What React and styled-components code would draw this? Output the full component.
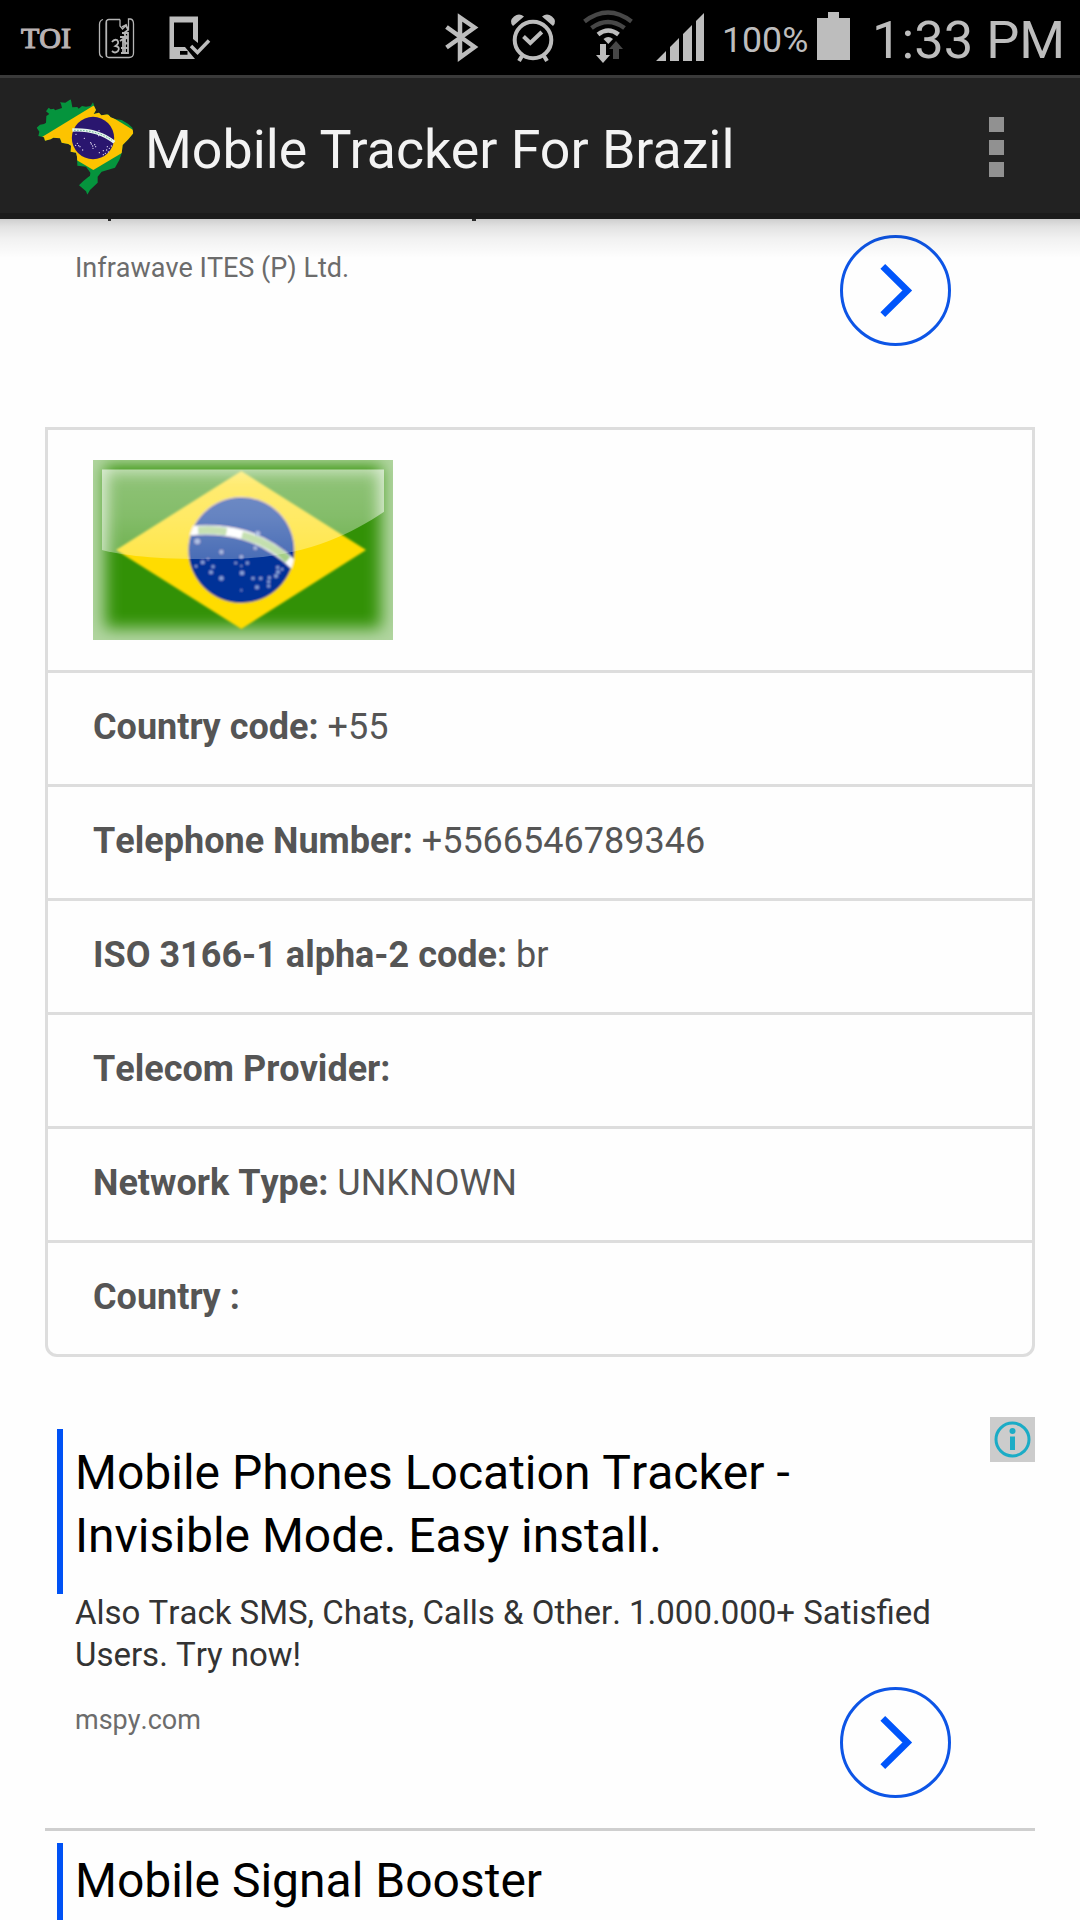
import React from 'react'
import styled, { createGlobalStyle } from 'styled-components'

const GlobalStyle = createGlobalStyle`
    * {
        box-sizing: border-box;
    }
    body {
        margin: 0;
        background-color: #fefefe;
        font-family: Roboto, "Liberation Sans", sans-serif;
        font-kerning: none;
    }
`
const Screen = styled.div`
    width: 1080px;
    height: 1920px;
    overflow: hidden;
    background-color: #fefefe;
`
const StatusBar = styled.div`
    height: 78px;
    display: flex;
    justify-content: space-between;
    background-color: black;
    border-bottom: 3px solid #3a3a3a;
    color: #bdbdbd;
`
const StatusGroup = styled.div`
    display: flex;
    align-items: center;
    height: 75px;
    white-space: nowrap;
`
const StatusIcon = styled.svg`
    display: block;
    flex: none;
    width: ${props => props.$w}px;
    height: 75px;
`
const NewsTag = styled.span`
    width: 49px;
    margin: 0 25px 0 21px;
    font-family: "Liberation Serif", serif;
    font-size: 30px;
    line-height: 75px;
    color: #b9b2b3;
    -webkit-text-stroke: 1.2px #b9b2b3;
`
const BatteryLevel = styled.span`
    width: 91px;
    margin-left: 16px;
    padding-top: 6px;
    font-size: 35.7px;
    line-height: 79px;
`
const Clock = styled.span`
    width: 213px;
    padding: 6px 0 0 5px;
    font-size: 52.5px;
    line-height: 81px;
`
const AppBar = styled.div`
    position: relative;
    z-index: 1;
    height: 141px;
    display: flex;
    align-items: center;
    background-color: #222222;
    border-bottom: 6px solid #1b1b1b;

    &::after {
        content: "";
        position: absolute;
        left: 0;
        right: 0;
        top: 141px;
        height: 39px;
        background: linear-gradient(rgba(0, 0, 0, 0.19), rgba(0, 0, 0, 0.11) 20%, rgba(0, 0, 0, 0.05) 50%, rgba(0, 0, 0, 0));
    }
`
const AppLogo = styled.svg`
    width: 110px;
    height: 110px;
    margin: 3px 0 0 33px;
`
const AppTitle = styled.h1`
    flex: 1;
    margin: 0;
    padding: 8px 0 0 2px;
    font-size: 53.7px;
    font-weight: 400;
    font-kerning: normal;
    line-height: 64px;
    color: #f3f3f3;
`
const MenuButton = styled.div`
    display: flex;
    flex-direction: column;
    gap: 7.5px;
    margin: 3px 76px 0 0;
`
const MenuDot = styled.span`
    width: 15px;
    height: 15px;
    background-color: #919191;
`
const Page = styled.div`
    margin: 0 45px;
`
const Ad = styled.div`
    position: relative;
    padding-left: 12px;
    border-bottom: ${props => props.$divider ? "3px solid #cfcfcf" : "none"};
    padding-bottom: ${props => props.$divider ? "30px" : "0"};
    margin-bottom: ${props => props.$divider ? "12px" : "0"};
`
const TopAd = styled(Ad)`
    height: 208px;
`
const Headline = styled.h2`
    margin: 0;
    height: 165px;
    padding: ${props => props.$short ? "6px" : "12px"} 0 0 12px;
    border-left: 6px solid #0052f5;
    font-size: 48px;
    font-weight: 400;
    line-height: 63px;
    color: black;
    white-space: pre-line;
`
const Description = styled.p`
    margin: -2px 0 0;
    padding-left: 18px;
    font-size: 33px;
    line-height: 42px;
    color: #333333;
    white-space: pre-line;
`
const Descenders = styled.div`
    display: flex;
    gap: 361px;
    height: 5px;
    padding-left: 51px;
`
const Descender = styled.span`
    width: ${props => props.$w}px;
    height: 2px;
    background-color: #333333;
`
const AdFooter = styled.div`
    display: flex;
    justify-content: space-between;
    margin-top: 11px;
    padding: 0 84px 0 18px;
`
const Domain = styled.span`
    padding-top: 12px;
    font-size: 27px;
    line-height: 42px;
    color: #6c6c6c;
`
const RoundButton = styled.div`
    width: 111px;
    height: 111px;
    border: 3px solid #0d55e6;
    border-radius: 50%;
`
const InfoBadge = styled.div`
    position: absolute;
    top: -12px;
    right: 0;
    width: 45px;
    height: 45px;
    background-color: #cccccc;
`
const Details = styled.div`
    margin-bottom: 72px;
    border: 3px solid #dddddd;
    border-radius: 0 0 12px 12px;
`
const Row = styled.div`
    height: ${props => props.$tall ? "243px" : "114px"};
    padding: ${props => props.$tall ? "30px 45px" : "32px 45px"};
    border-bottom: 3px solid #dddddd;
    font-size: 36px;
    line-height: 45px;
    color: #555555;

    &:last-child {
        height: 111px;
        border-bottom: none;
    }
`
const FlagImage = styled.svg`
    display: block;
    width: 300px;
    height: 180px;
`

const rows = [
    { label: "Country code:", value: "+55" },
    { label: "Telephone Number:", value: "+5566546789346" },
    { label: "ISO 3166-1 alpha-2 code:", value: "br" },
    { label: "Telecom Provider:", value: "" },
    { label: "Network Type:", value: "UNKNOWN" },
    { label: "Country :", value: "" },
]

const logoStars = [
    [228, 403], [253, 415], [232, 430], [227, 436], [240, 440], [248, 450], [236, 437], [274, 432],
    [278, 438], [284, 434], [272, 428], [287, 440], [279, 445], [298, 458], [310, 452], [316, 460],
    [310, 464], [322, 440], [328, 445], [320, 450], [297, 392], [296, 407], [325, 456], [334, 438],
]
const flagStars = [
    [502, 394, 8], [574, 426, 6], [518, 457, 6], [498, 469, 4], [534, 448, 3], [549, 470, 5], [543, 487, 6],
    [574, 505, 7], [634, 441, 5], [617, 459, 4], [652, 459, 5], [634, 468, 3], [636, 489, 7], [669, 505, 5],
    [692, 505, 5], [681, 532, 6], [716, 515, 5], [716, 528, 5], [718, 503, 5], [738, 498, 6], [744, 486, 6],
    [743, 472, 5], [756, 478, 4], [634, 541, 3], [683, 371, 7], [676, 414, 5],
]

const Logo = () => (
    <AppLogo viewBox="99 276 330 330">
        <clipPath id="land">
            <path d="M110 383l10-9 12-2 6-4 1-20 9-6-10-8 8-11 6 5 10-2 3 5 21-7-3-12-3-5 16 1 16-10 2 7 3 17 15-1 4 5 10-8 12 2 14-2 7-11 3 9 3 8 3 6-7 12 16-4 7 8 21-3 7 9 16 6 17 2 20 12 12 11 3 17-15 18-17 17-3 25-7 20-13 23-15 5-25 7-12 15v18l-23 22-8 14-4-10-21-18 13-13 12-10 8-6 1-9-13-18-18-2-8-1-1-27-3-12-16-3 1-18-8-5-20-4-5-13-20-2-8 5-17 4-3-10-17-4 3-13z" />
        </clipPath>
        <g clipPath="url(#land)">
            <path d="M100 280h310v310h-310z" fill="#05943d" />
            <path d="M120 415l160-98 160 98-160 95z" fill="#fdc300" />
        </g>
        <circle cx="279" cy="414" r="63.5" fill="#2a166f" />
        <path d="M217 390c46-2 88 6 126 37" fill="none" stroke="#e8f5ee" strokeWidth="10" />
        <path d="M222 391c42-1 80 6 114 30" fill="none" stroke="#6fb59a" strokeWidth="3" strokeDasharray="5 4" />
        {logoStars.map(([x, y]) => <circle key={x + "-" + y} cx={x} cy={y} r="1.9" fill="#e6e2f5" />)}
    </AppLogo>
)

const Flag = () => (
    <FlagImage viewBox="189 150 900 540">
        <defs>
            <linearGradient id="gloss" x1="0" y1="0" x2="0" y2="1">
                <stop offset="0" stopColor="#fff" stopOpacity="0.46" />
                <stop offset="0.5" stopColor="#fff" stopOpacity="0.4" />
                <stop offset="1" stopColor="#fff" stopOpacity="0.28" />
            </linearGradient>
            <clipPath id="glossArea">
                <path d="M216 178h846v127c-110 76-260 141-480 143-180 0-290-8-366-28z" />
            </clipPath>
            <clipPath id="globe">
                <circle cx="634" cy="420" r="160" />
            </clipPath>
            <filter id="soft" x="-20%" y="-20%" width="140%" height="140%"><feGaussianBlur stdDeviation="24" /></filter>
            <filter id="slight"><feGaussianBlur stdDeviation="2.4" /></filter>
        </defs>
        <path d="M189 150h900v540h-900z" fill="#329106" />
        <rect x="180" y="122" width="918" height="578" fill="none" stroke="#fff" strokeOpacity="0.62" strokeWidth="90" filter="url(#soft)" />
        <g filter="url(#slight)">
            <path d="M258 420l376-237 374 237-374 237z" fill="#ffdc00" />
            <circle cx="634" cy="420" r="159" fill="#003198" />
            <g clipPath="url(#globe)">
                <path d="M470 363c124-12 228 10 326 106" fill="none" stroke="#fff" strokeWidth="27" />
                <path d="M504 361c30-2 60-1 86 4M636 375c54 14 98 38 138 74" fill="none" stroke="#a6cf88" strokeWidth="22" />
            </g>
            {flagStars.map(([x, y, r]) => <circle key={x + "-" + y} cx={x} cy={y} r={r} fill="#8ba3d8" />)}
        </g>
        <g clipPath="url(#glossArea)">
            <path d="M216 178h846v280h-846z" fill="url(#gloss)" />
            <rect x="206" y="168" width="866" height="400" fill="none" stroke="#fff" strokeOpacity="0.4" strokeWidth="40" filter="url(#soft)" />
        </g>
    </FlagImage>
)

const NextButton = () => (
    <RoundButton>
        <svg width="105" height="105" viewBox="3 3 105 105">
            <path d="M42.800 31.300l24.500 24.200-24.500 24.200" fill="none" stroke="#0055fb" strokeWidth="6.8" />
        </svg>
    </RoundButton>
)

export default function App() {
    return (
        <Screen>
            <GlobalStyle />
            <StatusBar>
                <StatusGroup>
                    <NewsTag>TOI</NewsTag>
                    {/* notebook */}
                    <StatusIcon $w={45} viewBox="95 0 45 75">
                        <g fill="none" stroke="#b5b5b5" strokeWidth="1.3">
                            <path d="M103 19.500q-3.500 1-3.500 5v28q0 4 3.500 5M120 19.500h-11q-3 0-3 4v30q0 4 3 4h20q4.500 0 4.500-4.500v-29q0-4.500-3-5h-2v10l-3-3-3 3-2.500-3v-6.500M106.500 20v37" />
                            <path d="M112 42q2-3 5-2 3 3-1.500 6 5 1 2.500 5-3 3-6 0M120 41l3-2v14M122 27l4-2 2 5-4 3 3 5-4 2 4 4M122 33h6v20h-7M125 32v20M120 37h8M121 48h7" strokeWidth="1.8" />
                        </g>
                    </StatusIcon>
                    {/* device check */}
                    <StatusIcon $w={80} viewBox="140 0 80 75">
                        <path fillRule="evenodd" d="M169.500 16.500h28.500v26.500l-5-4v-16.500h-19v24.500h11l10 12h-25.500zM180 51v3.800h7.500v-3.800z" fill="#bdbdbd" />
                        <path d="M191 46l6.500 6.500 11.500-12" fill="none" stroke="#bdbdbd" strokeWidth="3.500" />
                    </StatusIcon>
                </StatusGroup>
                <StatusGroup>
                    {/* bluetooth */}
                    <StatusIcon $w={50} viewBox="440 0 50 75">
                        <path d="M446.500 27l28 20-14.500 10.500v-40l14.500 10-28 20" fill="none" stroke="#bdbdbd" strokeWidth="4.500" />
                    </StatusIcon>
                    {/* alarm */}
                    <StatusIcon $w={80} viewBox="490 0 80 75">
                        <g fill="none" stroke="#bdbdbd">
                            <circle cx="533" cy="40" r="18.300" strokeWidth="4" />
                            <path d="M523.500 36.500l6.800 6.500 11.500-11" strokeWidth="4" />
                            <path d="M522 56l-3 5M544 56l3 5" strokeWidth="4" />
                        </g>
                        <path d="M513 26q-4.500-5 1-9.500 5-4 10 0zM553 26q4.500-5-1-9.500-5-4-10 0z" fill="#bdbdbd" />
                    </StatusIcon>
                    {/* wifi */}
                    <StatusIcon $w={80} viewBox="570 0 80 75">
                        <g fill="none">
                            <path d="M584.500 21.500q23.500-18 47 0" stroke="#474747" strokeWidth="4.500" />
                            <path d="M591.500 28q16.500-12 33 0" stroke="#474747" strokeWidth="4.500" />
                            <path d="M598 34.500q10.200-8 20.500 0" stroke="#bdbdbd" strokeWidth="4.500" />
                        </g>
                        <path d="M603.500 39q4.700-4 9.500 0l-4.700 5z" fill="#bdbdbd" />
                        <path d="M600 44h6v11h4l-7 8-7-8h4z" fill="#bdbdbd" />
                        <path d="M613 59h6v-10h4l-7-8-7 8h4z" fill="#474747" />
                    </StatusIcon>
                    {/* signal */}
                    <StatusIcon $w={56} viewBox="650 0 56 75">
                        <path d="M656 61l10-10v10zM670 61v-14l9-9v23zM683 61v-27l9-9v36zM696 61v-40l8-8v48z" fill="#bdbdbd" />
                    </StatusIcon>
                    <BatteryLevel>100%</BatteryLevel>
                    {/* battery */}
                    <StatusIcon $w={54} viewBox="813 0 54 75">
                        <path d="M828 12h11v6h11v42h-33v-42h11z" fill="#bdbdbd" />
                    </StatusIcon>
                    <Clock>1:33 PM</Clock>
                </StatusGroup>
            </StatusBar>

            <AppBar>
                <Logo />
                <AppTitle>Mobile Tracker For Brazil</AppTitle>
                <MenuButton>
                    <MenuDot />
                    <MenuDot />
                    <MenuDot />
                </MenuButton>
            </AppBar>

            <Page>
                <TopAd>
                    {/* tail of the description line scrolled under the app bar */}
                    <Descenders>
                        <Descender $w={3} />
                        <Descender $w={4} />
                    </Descenders>
                    <AdFooter>
                        <Domain>Infrawave ITES (P) Ltd.</Domain>
                        <NextButton />
                    </AdFooter>
                </TopAd>

                <Details>
                    <Row $tall><Flag /></Row>
                    {rows.map((row) => (
                        <Row key={row.label}><b>{row.label}</b> {row.value}</Row>
                    ))}
                </Details>

                <Ad $divider>
                    <InfoBadge>
                        <svg width="45" height="45" viewBox="0 0 45 45">
                            <circle cx="22.500" cy="22.500" r="16.500" fill="none" stroke="#1bacc6" strokeWidth="3" />
                            <circle cx="22.500" cy="14" r="3" fill="#1bacc6" />
                            <path d="M20 19.500h5v13.500h-5z" fill="#1bacc6" />
                        </svg>
                    </InfoBadge>
                    <Headline>{"Mobile Phones Location Tracker -\nInvisible Mode. Easy install."}</Headline>
                    <Description>{"Also Track SMS, Chats, Calls & Other. 1.000.000+ Satisfied\nUsers. Try now!"}</Description>
                    <AdFooter>
                        <Domain>mspy.com</Domain>
                        <NextButton />
                    </AdFooter>
                </Ad>
                <Ad>
                    <Headline $short>Mobile Signal Booster</Headline>
                </Ad>
            </Page>
        </Screen>
    )
}
